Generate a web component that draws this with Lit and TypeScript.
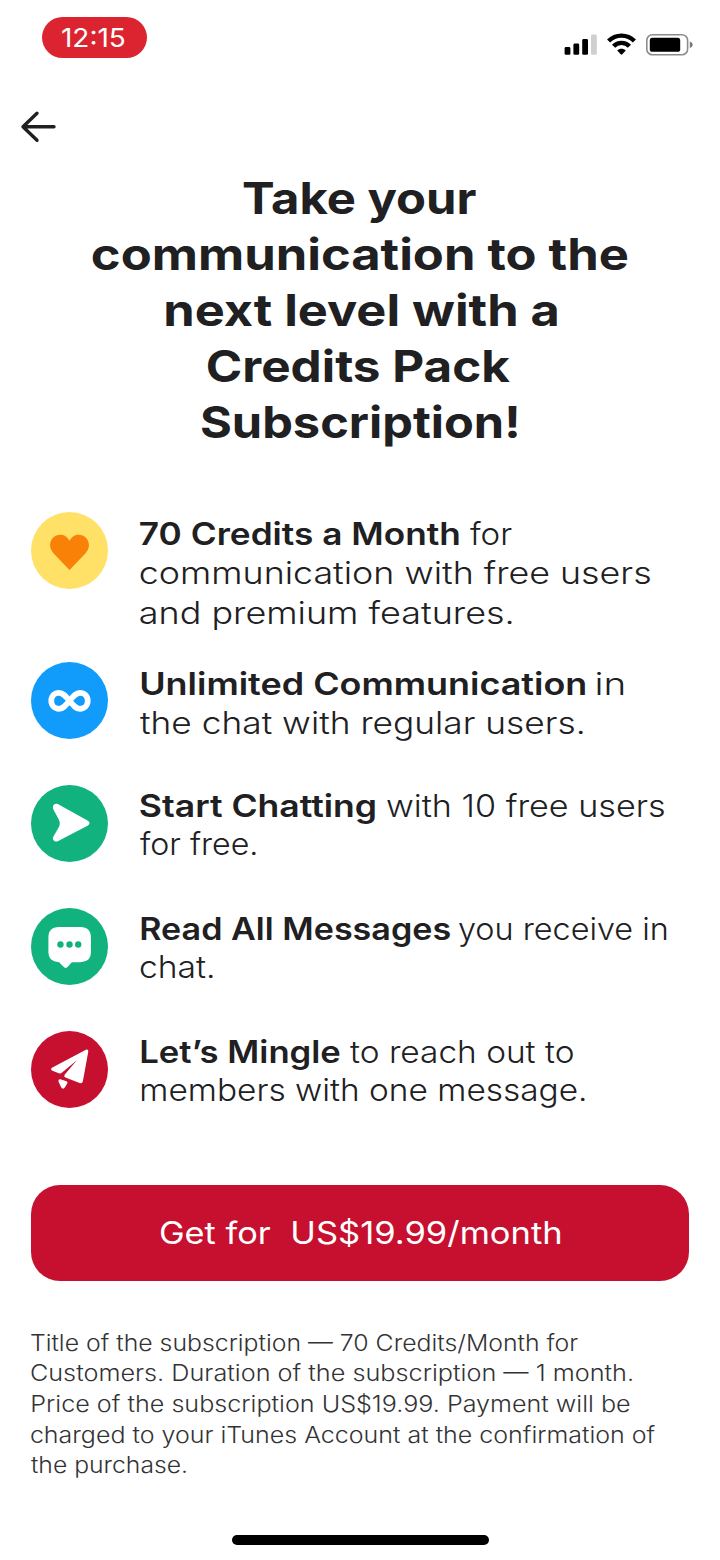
import { LitElement, html, css, svg } from "lit";
import { customElement, property } from "lit/decorators.js";

const FAMILY = 'Inter, "Noto Sans", sans-serif';
const pen = document.createElement("canvas").getContext("2d")!;

interface Run { text: string; width: number; bold?: boolean; gap?: number }
type Line = Run[];

/* A run of text whose visible glyphs span `width` pixels. */
@customElement("fit-run")
class FitRun extends LitElement {
  @property() text = "";
  @property({ type: Number }) width = 0;
  @property({ type: Number }) size = 16;
  @property({ type: Number }) weight = 400;

  static styles = css`
    :host { display: block; flex: none; text-align: left; }
    .box { display: block; white-space: pre; }
    .glyphs { display: block; width: max-content; transform-origin: 0 50%; }
  `;

  render() {
    pen.font = `${this.weight} ${this.size}px ${FAMILY}`;
    const m = pen.measureText(this.text);
    const s = (this.width - 1.5) / (m.actualBoundingBoxLeft + m.actualBoundingBoxRight);
    const stem = /^[BDELMPRUmn]/.test(this.text) ? 1.5 : 0;
    const shift = m.actualBoundingBoxLeft * s + stem;
    return html`<span class="box" style="width:${this.width}px"><span class="glyphs"
      style="font-size:${this.size}px;font-weight:${this.weight};transform:translateX(${shift}px) scaleX(${s})">${this.text}</span></span>`;
  }
}

const heart = svg`<circle cx="115" cy="115" r="115" fill="#ffe168"/>
  <path fill="#f98107" d="M115 173 L67 123 C58 113 55 101 58 91 C64 65 101 57 115 86 C129 57 166 65 172 91 C175 101 172 113 163 123 Z"/>`;
const infinity = svg`<circle cx="115" cy="115" r="115" fill="#119cfc"/>
  <path fill="none" stroke="#fff" stroke-width="17" stroke-linecap="round" stroke-linejoin="round" d="M115 116 C103 101 95 92 84 92 C70 92 60.500 102 60.500 116 C60.500 130 70 140 84 140 C95 140 103 131 115 116 C127 101 135 92 146 92 C160 92 169.500 102 169.500 116 C169.500 130 160 140 146 140 C135 140 127 131 115 116 Z"/>`;
const start = svg`<circle cx="115" cy="115" r="115" fill="#12b27f"/>
  <path fill="#fff" d="M80 57 L170 107 Q180 114 170 121 L80 168 C70 172 62 163 67 154 L83 126 Q89 115 83 103 L67 73 C62 62 70 52 80 57 Z"/>`;
const bubble = svg`<circle cx="115" cy="115" r="115" fill="#12b27f"/>
  <path fill="#fff" d="M84 57 H147 C169 57 179 68 179 89 V131 C179 152 169 161 147 162 H122 L109 176 Q104 181 98 176 L84 162 C62 160 52 151 52 131 V89 C52 68 62 57 84 57 Z"/>
  <g fill="#12b27f"><circle cx="88" cy="109" r="9.5"/><circle cx="115" cy="109" r="9.5"/><circle cx="141" cy="109" r="9.5"/></g>`;
const plane = svg`<circle cx="115" cy="115" r="115" fill="#c70f30"/>
  <path fill="#fff" d="M164 56 Q172 53 171 62 L155 150 Q153 158 145 155 L103 139 Q97 136 101 130 L137 87 L92 125 Q88 128 83 126 L64 119 Q56 114 64 109 Z"/>
  <path fill="#fff" d="M88 144 L106 150 Q111 152 108 157 L101 169 Q95 176 90 168 L82 151 Q81 143 88 144 Z"/>`;

const title: Line[] = [
  [{ text: "Take your", width: 235 }],
  [{ text: "communication to the", width: 537 }],
  [{ text: "next level with a", width: 393 }],
  [{ text: "Credits Pack", width: 304 }],
  [{ text: "Subscription!", width: 318 }],
];

const features: { icon: unknown; cls: string; lines: Line[] }[] = [
  { icon: heart, cls: "tall", lines: [
    [{ text: "70 Credits a Month", width: 320, bold: true }, { text: "for", width: 43.5, gap: 10.5 }],
    [{ text: "communication with free users", width: 512 }],
    [{ text: "and premium features.", width: 373 }] ] },
  { icon: infinity, cls: "roomy", lines: [
    [{ text: "Unlimited Communication", width: 445, bold: true }, { text: "in", width: 28, gap: 12 }],
    [{ text: "the chat with regular users.", width: 444 }] ] },
  { icon: start, cls: "", lines: [
    [{ text: "Start Chatting", width: 237, bold: true }, { text: "with 10 free users", width: 279, gap: 10 }],
    [{ text: "for free.", width: 117 }] ] },
  { icon: bubble, cls: "", lines: [
    [{ text: "Read All Messages", width: 310, bold: true }, { text: "you receive in", width: 209, gap: 9.5 }],
    [{ text: "chat.", width: 74 }] ] },
  { icon: plane, cls: "", lines: [
    [{ text: "Let’s Mingle", width: 200.5, bold: true }, { text: "to reach out to", width: 224.5, gap: 9.5 }],
    [{ text: "members with one message.", width: 444.5 }] ] },
];

const legal: Line[] = [
  [{ text: "Title of the subscription — 70 Credits/Month for", width: 548.5 }],
  [{ text: "Customers. Duration of the subscription — 1 month.", width: 603 }],
  [{ text: "Price of the subscription US$19.99. Payment will be", width: 598.5 }],
  [{ text: "charged to your iTunes Account at the confirmation of", width: 626 }],
  [{ text: "the purchase.", width: 157 }],
];

@customElement("app-root")
class AppRoot extends LitElement {
  static styles = css`
    :host { display: block; width: 720px; height: 1560px; background: #fff; color: #202022; font-family: Inter, "Noto Sans", sans-serif; overflow: hidden; }
    * { box-sizing: border-box; margin: 0; }
    svg { display: block; }
    .page { display: flex; flex-direction: column; height: 1560px; }
    .status { display: flex; justify-content: space-between; height: 105px; padding: 16.5px 27px 0 42px; flex: none; }
    .time { display: flex; align-items: center; justify-content: center; width: 105px; height: 41px; border-radius: 20.5px; background: #dc2430; color: #fff; }
    .system { padding-top: 14px; }
    .back { display: block; border: 0; background: none; padding: 0; margin-left: 18px; width: 42px; height: 44px; flex: none; }
    .line { display: flex; }
    .title { margin-top: 20.5px; line-height: 56px; font-size: 44px; flex: none; }
    .title .line { justify-content: center; }
    .features { display: flex; flex-direction: column; margin: 62.5px 0 0 31px; padding: 0; list-style: none; flex: none; }
    .feature { display: flex; height: 123px; line-height: 38.5px; }
    .tall { height: 150px; line-height: 39.5px; }
    .roomy { line-height: 39.5px; }
    .feature svg { width: 77px; height: 77px; flex: none; }
    .copy { margin-left: 31.5px; padding-top: 1.5px; }
    .buy { display: flex; align-items: center; justify-content: center; width: 658px; height: 96px; margin: 30.5px 0 0 31px; padding: 0; border: 0; border-radius: 29px; background: #c70f30; color: #fff; font-family: inherit; line-height: 40px; flex: none; }
    .legal { margin: 47px 0 0 31px; line-height: 30.7px; color: #333335; flex: none; }
    .home { width: 257px; height: 10px; margin: auto auto 15px 232px; border-radius: 5px; background: #000; flex: none; }
  `;

  lines(lines: Line[], size: number, weight: number, boldWeight = 600) {
    return lines.map(line => html`<div class="line">${line.map(r => html`${r.gap ? html`<span style="width:${r.gap}px"> </span>` : ""}<fit-run .text=${r.text} .width=${r.width} .size=${size} .weight=${r.bold ? boldWeight : weight}></fit-run>`)}</div>`);
  }

  render() {
    return html`<main class="page">
      <header class="status">
        <div class="time"><fit-run .text=${"12:15"} .width=${64.5} .size=${26} .weight=${400}></fit-run></div>
        <svg class="system" width="130" height="42" viewBox="563 30.5 130 28" preserveAspectRatio="xMinYMin meet">
          <rect x="564.6" y="46.6" width="5.8" height="7.7" rx="1.4"/>
          <rect x="573.4" y="43" width="5.8" height="11.3" rx="1.4"/>
          <rect x="582.2" y="38.6" width="5.8" height="15.7" rx="1.4"/>
          <rect x="591" y="34" width="5.8" height="20.3" rx="1.4" fill="#cfcfcf"/>
          <g fill="none" stroke="#000" stroke-width="4.3">
            <path d="M608.6 40.6 C615.5 33.3 627.5 33.3 634.4 40.6"/>
            <path d="M613.6 45.8 C617.8 41.2 625.2 41.2 629.4 45.8"/>
          </g>
          <path d="M617.2 50 C619.5 47.6 623.5 47.6 625.8 50 L622.3 53.8 Q621.5 54.6 620.7 53.8 Z"/>
          <rect x="646.8" y="34.3" width="40.8" height="20" rx="5.6" fill="none" stroke="#8c8c8c" stroke-width="1.6"/>
          <rect x="649.8" y="37.3" width="30.4" height="14" rx="2.6"/>
          <path fill="#777" d="M689.8 41 Q692.7 42 692.7 44.3 Q692.7 46.6 689.8 47.6 Z"/>
        </svg>
      </header>
      <button class="back" aria-label="Back">
        <svg width="42" height="44" viewBox="18 105 42 44" fill="none" stroke="#202022" stroke-width="3.4" stroke-linecap="round" stroke-linejoin="round"><path d="M54 126.8 H23.5 M37 113.3 L23 126.8 L37 140.3"/></svg>
      </button>
      <h1 class="title">${this.lines(title, 44, 680)}</h1>
      <ul class="features">
        ${features.map(f => html`<li class="feature ${f.cls}"><svg viewBox="0 0 230 230">${f.icon}</svg><div class="copy">${this.lines(f.lines, 31, 300)}</div></li>`)}
      </ul>
      <button class="buy">${this.lines([[{ text: "Get for", width: 111.5 }, { text: "US$19.99/month", width: 269, gap: 19 }]], 31, 400)}</button>
      <div class="legal">${this.lines(legal, 22.5, 300)}</div>
      <div class="home"></div>
    </main>`;
  }
}
